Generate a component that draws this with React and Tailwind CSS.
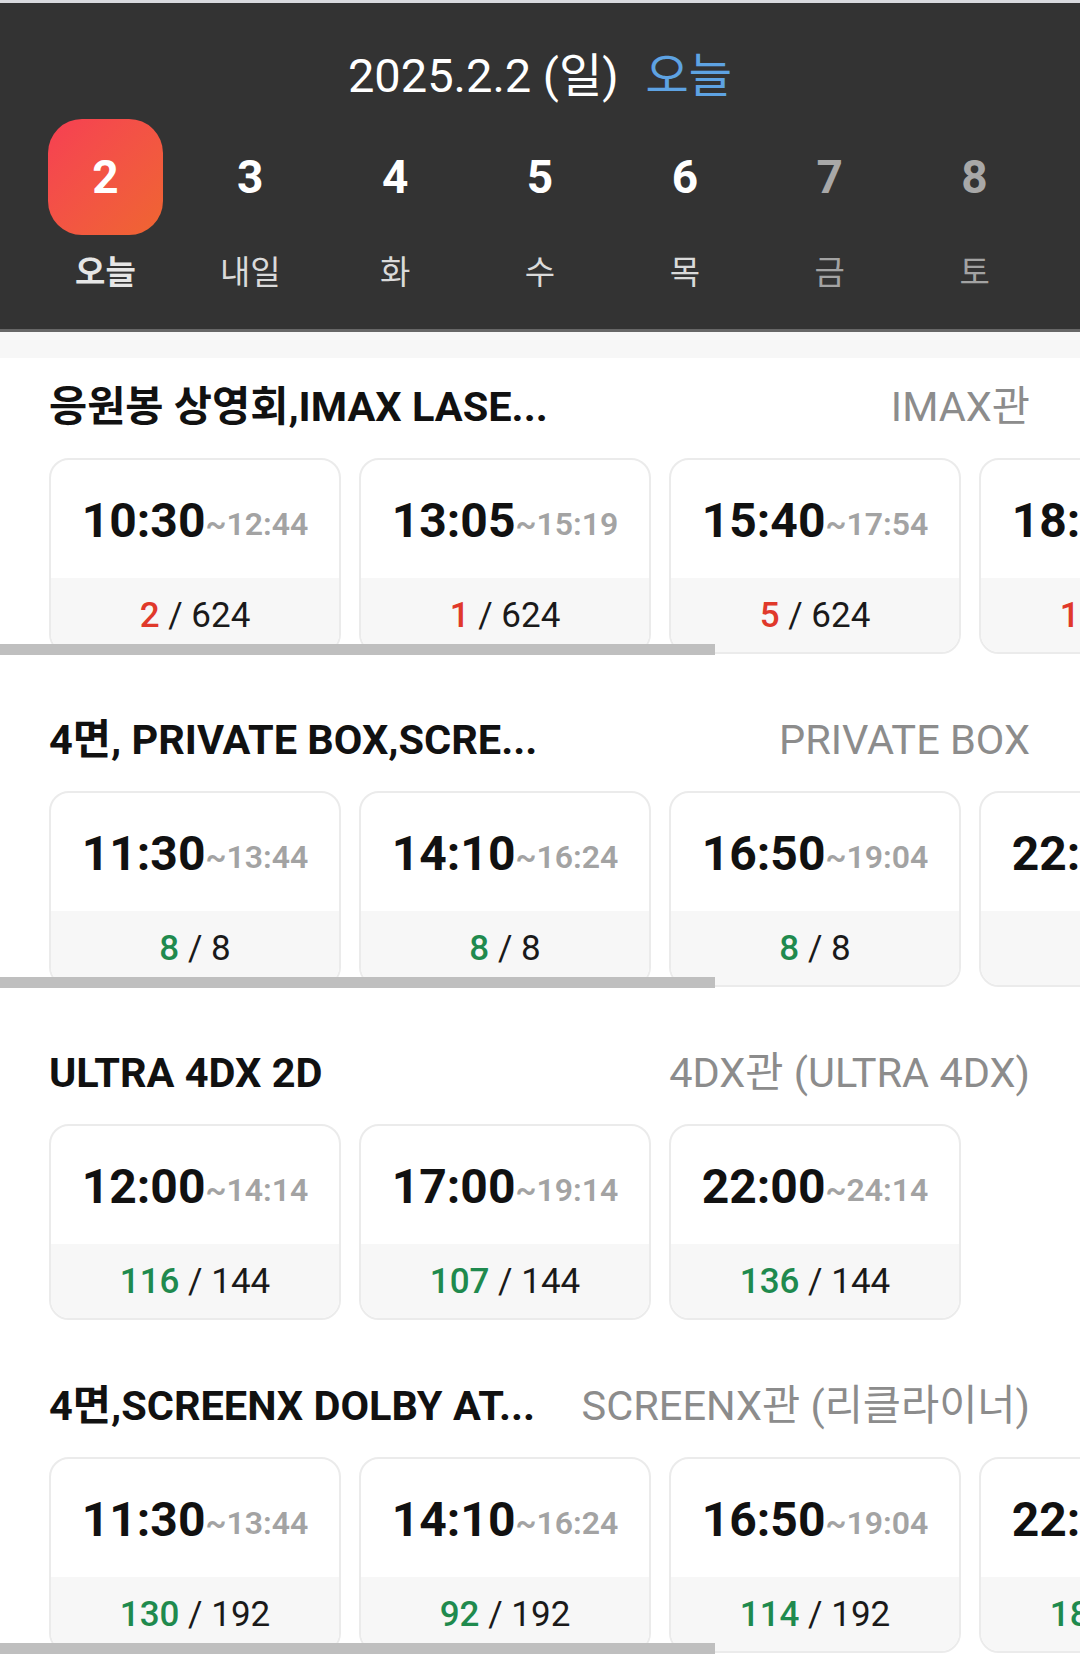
const DAYS = [
  { d: '2', label: '오늘', selected: true },
  { d: '3', label: '내일' },
  { d: '4', label: '화' },
  { d: '5', label: '수' },
  { d: '6', label: '목' },
  { d: '7', label: '금', dim: true },
  { d: '8', label: '토', dim: true },
]

const SECTIONS = [
  {
    title: '응원봉 상영회,IMAX LASE...',
    hall: 'IMAX관',
    low: true,
    shows: [
      ['10:30', '12:44', '2', '624'],
      ['13:05', '15:19', '1', '624'],
      ['15:40', '17:54', '5', '624'],
      ['18:15', '20:29', '17', '624'],
      ['20:50', '23:04', '3', '624'],
    ],
  },
  {
    title: '4면, PRIVATE BOX,SCRE...',
    hall: 'PRIVATE BOX',
    shows: [
      ['11:30', '13:44', '8', '8'],
      ['14:10', '16:24', '8', '8'],
      ['16:50', '19:04', '8', '8'],
      ['22:00', '24:14', '8', '8'],
      ['24:40', '26:54', '8', '8'],
    ],
  },
  {
    title: 'ULTRA 4DX 2D',
    hall: '4DX관 (ULTRA 4DX)',
    shows: [
      ['12:00', '14:14', '116', '144'],
      ['17:00', '19:14', '107', '144'],
      ['22:00', '24:14', '136', '144'],
    ],
  },
  {
    title: '4면,SCREENX DOLBY AT...',
    hall: 'SCREENX관 (리클라이너)',
    shows: [
      ['11:30', '13:44', '130', '192'],
      ['14:10', '16:24', '92', '192'],
      ['16:50', '19:04', '114', '192'],
      ['22:00', '24:14', '185', '192'],
      ['24:40', '26:54', '188', '192'],
    ],
  },
]

function ShowCard({ show, low }) {
  const [start, end, left, total] = show
  return (
    <div className="flex h-[196px] w-[292px] shrink-0 flex-col overflow-hidden rounded-[20px] border-2 border-[#ebebeb] bg-white">
      <div className="flex h-[118px] items-center justify-center pt-[4px]">
        <span className="text-[48px] font-bold leading-none text-[#111111]">{start}</span>
        <span className="mt-[6px] text-[32px] font-semibold leading-none text-[#a3a3a3]">~{end}</span>
      </div>
      <div className="flex flex-1 items-center justify-center bg-[#f7f7f7] text-[35px] leading-none">
        <span className={low ? 'font-medium text-[#e0392b]' : 'font-medium text-[#1f8a4e]'}>{left}</span>
        <span className="whitespace-pre text-[#1a1a1a]"> / {total}</span>
      </div>
    </div>
  )
}

function Section({ section }) {
  const scrolls = section.shows.length > 3
  return (
    <div className="pb-[36px] pt-[24px]">
      <div className="flex h-[50px] items-center justify-between pl-[49px] pr-[50px]">
        <p className="max-w-[500px] truncate text-[41.5px] font-bold leading-none text-[#111111]">{section.title}</p>
        <p className="whitespace-nowrap text-[41.5px] leading-none text-[#8c8c8c]">{section.hall}</p>
      </div>
      <div className="relative mt-[26px] h-[197px] overflow-hidden">
        <div className="flex gap-[18px] px-[49px]">
          {section.shows.map((s, i) => (
            <ShowCard key={i} show={s} low={section.low} />
          ))}
        </div>
        {scrolls && <div className="absolute bottom-0 left-0 h-[11px] w-[715px] bg-[#bfbfbf]" />}
      </div>
    </div>
  )
}

export default function App() {
  return (
    <div
      className="h-[1678px] w-[1080px] overflow-hidden bg-white"
      style={{ fontFamily: "Roboto, 'Noto Sans CJK KR', sans-serif" }}
    >
      <div className="h-[3px] bg-[#d9dadf]" />

      {/* Date header */}
      <div className="bg-[#333333] pb-[36px] pt-[44px]">
        <div className="flex h-[56px] items-center justify-center text-[47px] leading-none">
          <span className="text-white">2025.2.2 (일)</span>
          <span className="ml-[27px] text-[#5ea3e3]">오늘</span>
        </div>
        <div className="mt-[16px] grid grid-cols-7 px-[33px]">
          {DAYS.map((day) => (
            <div key={day.d} className="flex flex-col items-center">
              <div
                className={
                  day.selected
                    ? 'flex h-[116px] w-[115px] items-center justify-center rounded-[34px] bg-linear-to-br from-[#f63f52] to-[#ef6530]'
                    : 'flex h-[116px] w-[115px] items-center justify-center'
                }
              >
                <span className={day.dim ? 'text-[46px] font-bold text-[#a8a8a8]' : 'text-[46px] font-bold text-white'}>
                  {day.d}
                </span>
              </div>
              <span
                className={
                  day.selected
                    ? 'mt-[18px] h-[40px] text-[33px] font-semibold leading-[40px] text-[#e6e6e6]'
                    : day.dim
                      ? 'mt-[18px] h-[40px] text-[33px] leading-[40px] text-[#a3a3a3]'
                      : 'mt-[18px] h-[40px] text-[33px] leading-[40px] text-[#dadada]'
                }
              >
                {day.label}
              </span>
            </div>
          ))}
        </div>
      </div>
      <div className="h-[3px] bg-[#676767]" />
      <div className="h-[26px] bg-[#f7f7f7]" />

      {SECTIONS.map((s, i) => (
        <Section key={i} section={s} />
      ))}
    </div>
  )
}
